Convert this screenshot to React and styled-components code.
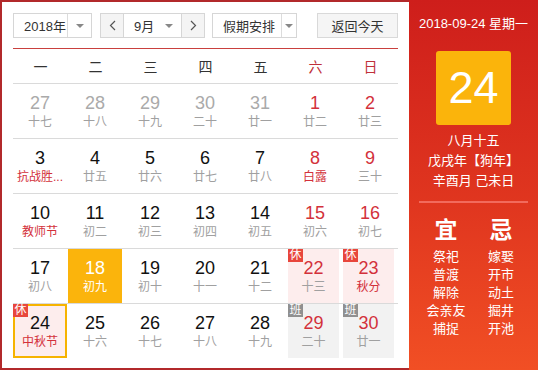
import React from 'react'
import styled, { createGlobalStyle } from 'styled-components';

const Global = createGlobalStyle`
  body {
    margin: 0;
    background: #fff;
    font-family: "Liberation Sans", "Noto Sans CJK SC", sans-serif;
  }
`;

const Widget = styled.div`
  display: flex;
  width: 538px;
  height: 370px;
`;

const Left = styled.div`
  box-sizing: border-box;
  width: 409px;
  height: 100%;
  border: 2px solid #b2292b;
  border-right: none;
  padding: 11px 11px 0 11px;
`;

const Toolbar = styled.div`
  display: flex;
  align-items: center;
  height: 25px;
`;

const Select = styled.div`
  box-sizing: border-box;
  display: flex;
  height: 25px;
  width: ${p => p.$w}px;
  margin-right: ${p => p.$mr || 0}px;
  border: 1px solid #d6d6d6;
  background: #fff;
  color: #333;
  font-size: 13px;
`;

const SelectText = styled.div`
  flex: 1;
  display: flex;
  align-items: center;
  padding-left: ${p => p.$pl || 10}px;
`;

const Arrow = styled.div`
  width: ${p => p.$w}px;
  display: flex;
  align-items: center;
  justify-content: center;
  border-left: ${p => (p.$line ? '1px solid #dcdcdc' : 'none')};
  &::after {
    content: '';
    border-left: 4px solid transparent;
    border-right: 4px solid transparent;
    border-top: 4px solid #888;
  }
`;

const MonthGroup = styled.div`
  box-sizing: border-box;
  display: flex;
  height: 25px;
  width: 105px;
  margin-right: 7px;
  border: 1px solid #d6d6d6;
  font-size: 13px;
  color: #333;
`;

const StepButton = styled.div`
  width: 22px;
  display: flex;
  align-items: center;
  justify-content: center;
  background: #f4f4f4;
  border-left: ${p => (p.$side === 'right' ? '1px solid #d6d6d6' : 'none')};
  border-right: ${p => (p.$side === 'left' ? '1px solid #d6d6d6' : 'none')};
`;

const TodayButton = styled.div`
  box-sizing: border-box;
  margin-left: auto;
  width: 81px;
  height: 25px;
  display: flex;
  align-items: center;
  justify-content: center;
  background: #f5f5f5;
  border: 1px solid #d9d9d9;
  font-size: 13px;
  color: #333;
`;

const Header = styled.div`
  display: grid;
  grid-template-columns: repeat(7, 55px);
  margin-top: 10px;
  height: 35px;
  box-sizing: border-box;
  border-top: 1px solid #c9403e;
`;

const WeekDay = styled.div`
  display: flex;
  align-items: center;
  justify-content: center;
  font-size: 14px;
  color: ${p => (p.$weekend ? '#c0303a' : '#333')};
`;

const Row = styled.div`
  display: grid;
  grid-template-columns: repeat(7, 55px);
  height: 55px;
  box-sizing: border-box;
  border-top: 1px solid #dadada;
`;

const bgFor = { rest: '#fdeded', work: '#f2f2f2', sel: '#fbb40c', today: '#fdeded' };

const Cell = styled.div`
  position: relative;
  box-sizing: border-box;
  height: 54px;
  width: ${p => (p.$kind === 'rest' || p.$kind === 'work' ? 51 : 54)}px;
  padding-top: ${p => (p.$kind === 'today' ? 6 : 8)}px;
  background: ${p => bgFor[p.$kind] || 'transparent'};
  border: ${p => (p.$kind === 'today' ? '2px solid #f6b300' : 'none')};
  display: flex;
  flex-direction: column;
  align-items: center;
`;

const Num = styled.div`
  font-size: 18px;
  line-height: 22px;
  color: ${p => p.$color};
`;

const Lunar = styled.div`
  font-size: 12px;
  line-height: 16px;
  white-space: nowrap;
  color: ${p => p.$color};
`;

const Badge = styled.div`
  position: absolute;
  left: ${p => p.$off}px;
  top: ${p => p.$off}px;
  width: 15px;
  height: 13px;
  font-size: 12px;
  line-height: 13px;
  text-align: center;
  color: #fff;
  background: ${p => (p.$type === 'work' ? '#909090' : '#e8463c')};
`;

const Right = styled.div`
  width: 129px;
  height: 370px;
  background: linear-gradient(180deg, #ce1e1b 0%, #e0361f 55%, #f14f24 100%);
  color: #fff;
  display: flex;
  flex-direction: column;
  align-items: center;
`;

const DateLine = styled.div`
  margin-top: 15px;
  font-size: 13px;
  line-height: 18px;
`;

const BigDay = styled.div`
  margin-top: 18px;
  width: 75px;
  height: 74px;
  border-radius: 3px;
  background: #fbb40b;
  display: flex;
  align-items: center;
  justify-content: center;
  font-size: 45px;
`;

const LunarInfo = styled.div`
  margin-top: 6px;
  font-size: 13px;
  line-height: 20px;
  text-align: center;
`;

const Divider = styled.div`
  margin-top: 10px;
  width: 109px;
  height: 2px;
  background: #f26a5c;
`;

const Advice = styled.div`
  display: grid;
  grid-template-columns: 55px 55px;
  margin-top: 14px;
`;

const AdviceCol = styled.div`
  display: flex;
  flex-direction: column;
  align-items: center;
`;

const AdviceTitle = styled.div`
  font-size: 23px;
  line-height: 26px;
  font-weight: bold;
  margin-bottom: 5px;
`;

const AdviceItem = styled.div`
  font-size: 13px;
  line-height: 18px;
`;

const Chevron = ({ dir }) => (
  <svg width="7" height="11" viewBox="0 0 7 11">
    <path
      d={dir === 'left' ? 'M6 1 L1.5 5.5 L6 10' : 'M1 1 L5.5 5.5 L1 10'}
      fill="none"
      stroke="#555"
      strokeWidth="1.2"
    />
  </svg>
);

const RED = '#d3313b';
const GRAY = '#a0a0a0';

// d: day, l: lunar, red: red number, fest: red lunar, prev: other month
const weeks = [
  [
    { d: 27, l: '十七', prev: true }, { d: 28, l: '十八', prev: true }, { d: 29, l: '十九', prev: true },
    { d: 30, l: '二十', prev: true }, { d: 31, l: '廿一', prev: true }, { d: 1, l: '廿二', red: true },
    { d: 2, l: '廿三', red: true },
  ],
  [
    { d: 3, l: '抗战胜...', fest: true }, { d: 4, l: '廿五' }, { d: 5, l: '廿六' }, { d: 6, l: '廿七' },
    { d: 7, l: '廿八' }, { d: 8, l: '白露', red: true, fest: true }, { d: 9, l: '三十', red: true },
  ],
  [
    { d: 10, l: '教师节', fest: true }, { d: 11, l: '初二' }, { d: 12, l: '初三' }, { d: 13, l: '初四' },
    { d: 14, l: '初五' }, { d: 15, l: '初六', red: true }, { d: 16, l: '初七', red: true },
  ],
  [
    { d: 17, l: '初八' }, { d: 18, l: '初九', kind: 'sel' }, { d: 19, l: '初十' }, { d: 20, l: '十一' },
    { d: 21, l: '十二' }, { d: 22, l: '十三', red: true, kind: 'rest', badge: '休' },
    { d: 23, l: '秋分', red: true, fest: true, kind: 'rest', badge: '休' },
  ],
  [
    { d: 24, l: '中秋节', fest: true, kind: 'today', badge: '休' }, { d: 25, l: '十六' }, { d: 26, l: '十七' },
    { d: 27, l: '十八' }, { d: 28, l: '十九' }, { d: 29, l: '二十', red: true, kind: 'work', badge: '班' },
    { d: 30, l: '廿一', red: true, kind: 'work', badge: '班' },
  ],
];

function Day({ c }) {
  let numColor = c.prev ? '#aaa' : c.red ? RED : '#111';
  let lunColor = c.fest ? RED : GRAY;
  if (c.kind === 'sel') {
    numColor = '#fff';
    lunColor = '#fff';
  }
  return (
    <Cell $kind={c.kind}>
      {c.badge && (
        <Badge $type={c.kind === 'work' ? 'work' : 'rest'} $off={c.kind === 'today' ? -2 : 0}>
          {c.badge}
        </Badge>
      )}
      <Num $color={numColor}>{c.d}</Num>
      <Lunar $color={lunColor}>{c.l}</Lunar>
    </Cell>
  );
}

const yi = ['祭祀', '普渡', '解除', '会亲友', '捕捉'];
const ji = ['嫁娶', '开市', '动土', '掘井', '开池'];

export default function App() {
  return (
    <>
      <Global />
      <Widget>
        <Left>
          <Toolbar>
            <Select $w={79} $mr={8}>
              <SelectText>2018年</SelectText>
              <Arrow $w={23} $line />
            </Select>
            <MonthGroup>
              <StepButton $side="left"><Chevron dir="left" /></StepButton>
              <SelectText>9月</SelectText>
              <Arrow $w={24} />
              <StepButton $side="right"><Chevron dir="right" /></StepButton>
            </MonthGroup>
            <Select $w={85}>
              <SelectText>假期安排</SelectText>
              <Arrow $w={14} $line />
            </Select>
            <TodayButton>返回今天</TodayButton>
          </Toolbar>
          <Header>
            {['一', '二', '三', '四', '五', '六', '日'].map((w, i) => (
              <WeekDay key={w} $weekend={i > 4}>{w}</WeekDay>
            ))}
          </Header>
          {weeks.map((wk, i) => (
            <Row key={i}>
              {wk.map((c, j) => <Day key={j} c={c} />)}
            </Row>
          ))}
        </Left>
        <Right>
          <DateLine>2018-09-24 星期一</DateLine>
          <BigDay>24</BigDay>
          <LunarInfo>
            <div>八月十五</div>
            <div>戊戌年【狗年】</div>
            <div>辛酉月 己未日</div>
          </LunarInfo>
          <Divider />
          <Advice>
            <AdviceCol>
              <AdviceTitle>宜</AdviceTitle>
              {yi.map(t => <AdviceItem key={t}>{t}</AdviceItem>)}
            </AdviceCol>
            <AdviceCol>
              <AdviceTitle>忌</AdviceTitle>
              {ji.map(t => <AdviceItem key={t}>{t}</AdviceItem>)}
            </AdviceCol>
          </Advice>
        </Right>
      </Widget>
    </>
  );
}
